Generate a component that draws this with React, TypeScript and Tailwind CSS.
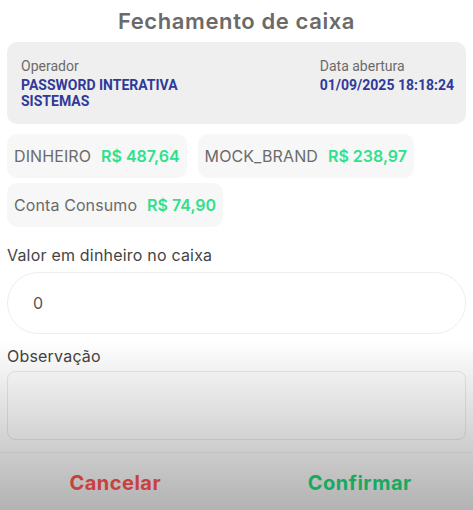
import React from "react";

const poppins = { fontFamily: "Inter, 'Noto Sans', sans-serif" };

function Chip({ label, value }: { label: string; value: string }) {
  return (
    <div className="flex items-center gap-[10px] rounded-[10px] bg-[#f7f7f7] h-[44px] px-[7px]">
      <span className="text-[16px] text-[#6b6b6b] tracking-[0.1px]">{label}</span>
      <span className="text-[16px] font-semibold text-[#2fe08c] tracking-[0px]">{value}</span>
    </div>
  );
}

export default function App() {
  return (
    <div className="relative w-[473px] h-[510px] overflow-hidden bg-white" style={poppins}>
      <div className="flex flex-col px-[7px]">
        <h1 className="text-center text-[22px] font-semibold text-[#6a6a6a] leading-none pt-[10px] pb-[10px] tracking-[0.6px]">
          Fechamento de caixa
        </h1>
        <div
          className="flex justify-between rounded-[10px] bg-[#efefef] h-[82px] pl-[14px] pr-[12px] pt-[16px]"
          style={{ fontFamily: "Roboto, 'Liberation Sans', sans-serif" }}
        >
          <div className="flex flex-col">
            <span className="text-[14px] text-[#6b6b6b] leading-[17px]">Operador</span>
            <span className="text-[14px] font-bold text-[#2f3a99] leading-[16px] mt-[2px]">
              PASSWORD INTERATIVA
              <br />
              SISTEMAS
            </span>
          </div>
          <div className="flex flex-col">
            <span className="text-[14px] text-[#6b6b6b] leading-[17px]">Data abertura</span>
            <span className="text-[14px] font-bold text-[#2f3a99] leading-[16px] mt-[2px]">01/09/2025 18:18:24</span>
          </div>
        </div>
        <div className="flex flex-wrap gap-x-[11px] gap-y-[5px] mt-[10px]">
          <Chip label="DINHEIRO" value="R$ 487,64" />
          <Chip label="MOCK_BRAND" value="R$ 238,97" />
          <Chip label="Conta Consumo" value="R$ 74,90" />
        </div>
        <label className="text-[16px] text-[#444] mt-[18px] leading-[20px] tracking-[0.2px]">Valor em dinheiro no caixa</label>
        <div className="mt-[7px] h-[62px] rounded-full border border-[#eeeeee] flex items-center pl-[25px] text-[16px] text-[#555]">
          0
        </div>
        <label className="text-[16px] text-[#444] mt-[12px] leading-[20px] tracking-[0.2px]">Observação</label>
        <div className="mt-[5px] h-[69px] rounded-[8px] border border-[#eaeaea]" />
      </div>
      <div className="pointer-events-none absolute left-0 right-0 top-[340px] bottom-0 bg-gradient-to-b from-[rgba(0,0,0,0)] to-[rgba(0,0,0,0.3)]" />
      <div className="absolute left-0 right-0 top-[452px] bottom-0 border-t border-[#c4c4c4] flex z-10">
        <div className="flex-1 flex items-center justify-center pt-[3px]">
          <span className="text-[20px] font-bold text-[#c8403f] tracking-[0.5px] pr-[6px]">Cancelar</span>
        </div>
        <div className="flex-1 flex items-center justify-center pt-[3px]">
          <span className="text-[20px] font-bold text-[#18a85f] tracking-[0.5px] pl-[10px]">Confirmar</span>
        </div>
      </div>
    </div>
  );
}
